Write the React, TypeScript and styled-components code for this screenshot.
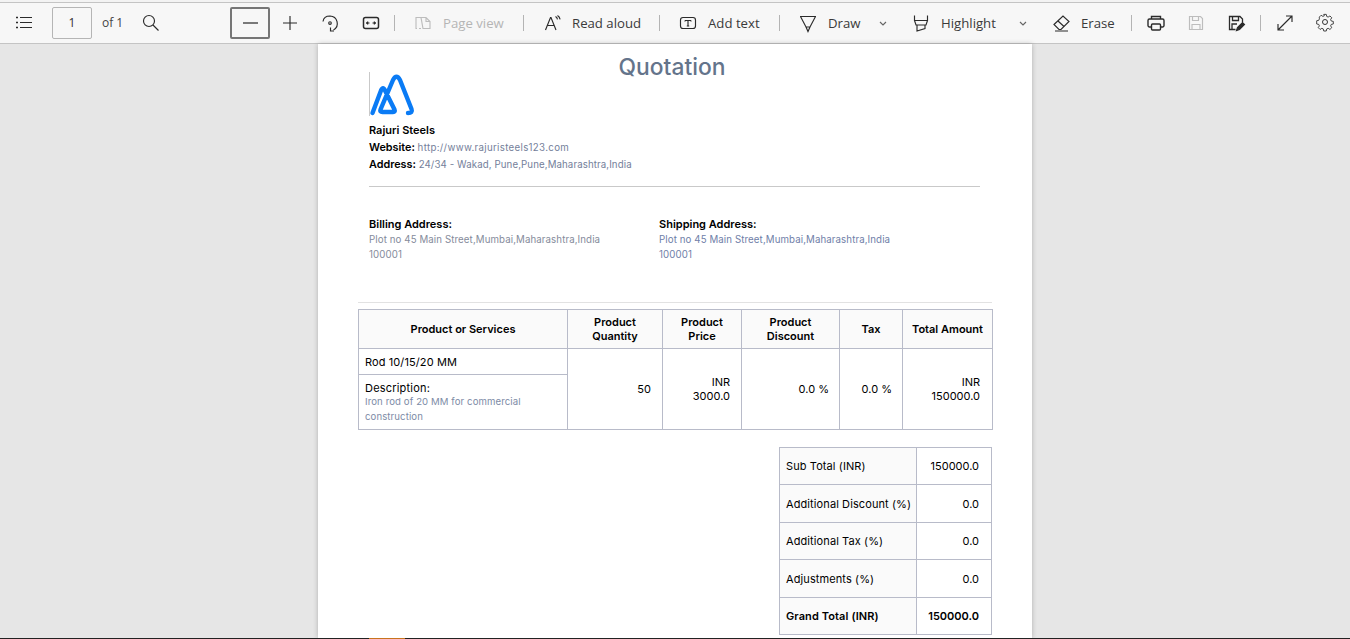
import React from 'react';
import styled, { createGlobalStyle } from 'styled-components';

const GlobalStyle = createGlobalStyle`
  html, body {
    margin: 0;
    padding: 0;
    height: 100%;
    overflow: hidden;
    background: #e6e6e6;
  }
`;

const Viewer = styled.div`
  position: relative;
  width: 1350px;
  height: 639px;
  overflow: hidden;
  background: #e6e6e6;
`;

// Toolbar
const Toolbar = styled.div`
  position: absolute;
  top: 2px;
  left: 0;
  width: 1350px;
  height: 42px;
  background: #f7f7f7;
  border-top: 1px solid #c4c4c4;
  border-bottom: 1px solid #c4c4c4;
  box-sizing: border-box;
  font-family: "Open Sans", "Noto Sans", sans-serif;
  font-size: 13.2px;
  color: #333;
`;

const TopStrip = styled.div`
  position: absolute;
  top: 0;
  left: 0;
  width: 1350px;
  height: 2px;
  background: #f3f3f3;
`;

const ToolIcon = styled.svg<{ $x: number; $y?: number; $size?: number }>`
  position: absolute;
  left: ${p => p.$x}px;
  top: ${p => p.$y ?? 10}px;
  width: ${p => p.$size ?? 20}px;
  height: ${p => p.$size ?? 20}px;
  fill: none;
  stroke: ${p => p.color ?? '#2b2b2b'};
  stroke-width: 1.15;
`;

const ToolLabel = styled.span<{ $x: number; $muted?: boolean }>`
  position: absolute;
  left: ${p => p.$x}px;
  top: 10px;
  line-height: 20px;
  white-space: nowrap;
  color: ${p => (p.$muted ? '#b5b5b5' : '#3a3a3a')};
`;

const Separator = styled.div<{ $x: number }>`
  position: absolute;
  left: ${p => p.$x}px;
  top: 12px;
  width: 1px;
  height: 16px;
  background: #b4b4b4;
`;

const PageInput = styled.div`
  position: absolute;
  left: 52px;
  top: 4px;
  width: 38px;
  height: 30px;
  border: 1px solid #b5b5b5;
  border-radius: 2px;
  text-align: center;
  line-height: 30px;
  font-size: 12px;
  color: #333;
`;

const PageCount = styled.span`
  position: absolute;
  left: 102px;
  top: 10px;
  line-height: 20px;
  font-size: 12px;
  color: #444;
`;

const FocusButton = styled.div`
  position: absolute;
  left: 230px;
  top: 4px;
  width: 36px;
  height: 28px;
  border: 2px solid #767676;
  border-radius: 2px;
  display: flex;
  align-items: center;
  justify-content: center;

  &::after {
    content: '';
    width: 15px;
    height: 2px;
    background: #7a7a7a;
  }
`;

// PDF sheet
const Sheet = styled.div`
  position: absolute;
  top: 44px;
  left: 318px;
  width: 714px;
  height: 594px;
  background: #fff;
  box-shadow: 0 0 5px rgba(0, 0, 0, 0.24);
  font-family: Inter, Roboto, sans-serif;
  color: #000;
`;

const Title = styled.h1`
  position: absolute;
  left: 0;
  right: 6px;
  top: 9px;
  margin: 0;
  text-align: center;
  font-size: 22.8px;
  line-height: 28px;
  font-weight: 500;
  color: #64748b;
`;

const LogoBox = styled.svg`
  position: absolute;
  left: 51px;
  top: 28px;
  width: 47px;
  height: 45px;
`;

const Company = styled.div`
  position: absolute;
  left: 51px;
  top: 78px;
  font-size: 11px;
  line-height: 17px;
  font-weight: 600;
  white-space: nowrap;
`;

const InfoRow = styled.div<{ $top: number }>`
  position: absolute;
  left: 51px;
  top: ${p => p.$top}px;
  font-size: 10.8px;
  line-height: 17px;
  font-weight: 600;
  white-space: nowrap;
`;

const Muted = styled.span<{ $wide?: boolean }>`
  font-size: 9.7px;
  font-weight: 400;
  color: #74809a;
  letter-spacing: ${p => (p.$wide ? '0.32px' : '0.1px')};
`;

const Rule = styled.div<{ $left: number; $width: number; $top: number; $color: string }>`
  position: absolute;
  left: ${p => p.$left}px;
  top: ${p => p.$top}px;
  width: ${p => p.$width}px;
  height: 1px;
  background: ${p => p.$color};
`;

const AddressBlock = styled.div<{ $left: number }>`
  position: absolute;
  left: ${p => p.$left}px;
  top: 172px;
  width: 260px;
`;

const AddressHead = styled.div`
  font-size: 11px;
  line-height: 17px;
  font-weight: 600;
`;

const AddressBody = styled.div<{ $tint?: boolean }>`
  margin-top: -1px;
  font-size: 9.7px;
  line-height: 15px;
  color: ${p => (p.$tint ? '#6f80a8' : '#858b9b')};
  letter-spacing: 0.1px;
`;

// Tables
const ItemsTable = styled.table`
  position: absolute;
  left: 40px;
  top: 265px;
  width: 634px;
  height: 121px;
  table-layout: fixed;
  border-collapse: collapse;
  font-size: 11px;
`;

const HeadCell = styled.th<{ $w: number }>`
  width: ${p => p.$w}px;
  height: 39px;
  padding: 0 4px;
  box-sizing: border-box;
  border: 1px solid #b8bbc9;
  background: #fafafa;
  font-weight: 600;
  line-height: 14px;
  text-align: center;
`;

const NameCell = styled.td`
  height: 26px;
  padding: 0 6px;
  box-sizing: border-box;
  border: 1px solid #b8bbc9;
  letter-spacing: 0.1px;
`;

const DescCell = styled.td`
  height: 55px;
  padding: 6px 6px 4px;
  box-sizing: border-box;
  border: 1px solid #b8bbc9;
  line-height: 14px;
  vertical-align: top;
  letter-spacing: 0.2px;
`;

const DescText = styled.div`
  margin-top: -1px;
  font-size: 9.6px;
  line-height: 15px;
  color: #7d8ba6;
  letter-spacing: 0.1px;
`;

const NumCell = styled.td<{ $pad: number }>`
  padding: 0 ${p => p.$pad}px 1px 6px;
  border: 1px solid #b8bbc9;
  text-align: right;
  line-height: 14px;
`;

const SummaryTable = styled.table`
  position: absolute;
  left: 461px;
  top: 403px;
  width: 213px;
  table-layout: fixed;
  border-collapse: collapse;
  font-size: 11px;
`;

const SummaryRow = styled.tr<{ $h: number }>`
  height: ${p => p.$h}px;
`;

const SummaryLabel = styled.td<{ $bold?: boolean }>`
  width: 137px;
  padding: 0 0 0 6px;
  box-sizing: border-box;
  border: 1px solid #b8bbc9;
  background: #fafafa;
  white-space: nowrap;
  letter-spacing: 0.1px;
  font-weight: ${p => (p.$bold ? 600 : 400)};
`;

const SummaryValue = styled.td<{ $bold?: boolean }>`
  padding: 0 12px 0 0;
  border: 1px solid #b8bbc9;
  text-align: right;
  font-weight: ${p => (p.$bold ? 600 : 400)};
`;

// Bottom edge of the window
const BottomLine = styled.div`
  position: absolute;
  left: 0;
  bottom: 0;
  width: 1350px;
  height: 1px;
  background: #222;
`;

const BottomAccent = styled.div`
  position: absolute;
  left: 369px;
  bottom: 0;
  width: 36px;
  height: 1px;
  background: #c8741e;
`;

const summaryRows = [
  { label: 'Sub Total (INR)', value: '150000.0', h: 37 },
  { label: 'Additional Discount (%)', value: '0.0', h: 38 },
  { label: 'Additional Tax (%)', value: '0.0', h: 37 },
  { label: 'Adjustments (%)', value: '0.0', h: 38 },
  { label: 'Grand Total (INR)', value: '150000.0', h: 37, bold: true },
];

const chevron = 'M7 9l3 3 3-3';

const App: React.FC = () => (
  <Viewer>
    <GlobalStyle />
    <TopStrip />
    <Toolbar>
      <ToolIcon $x={15} viewBox="0 0 20 20">
        <path d="M5 4.500h12M5 9.500h12M5 14.500h12" />
        <path d="M1 4.500h2M1 9.500h2M1 14.500h2" strokeWidth="1.600" />
      </ToolIcon>
      <PageInput>1</PageInput>
      <PageCount>of 1</PageCount>
      <ToolIcon $x={141} viewBox="0 0 20 20">
        <circle cx="8" cy="8" r="5.500" />
        <path d="M12 12l5.500 5.500" />
      </ToolIcon>
      <FocusButton />
      <ToolIcon $x={280} viewBox="0 0 20 20">
        <path d="M10 3v14M3 10h14" />
      </ToolIcon>
      <ToolIcon $x={320} viewBox="0 0 20 20">
        <path d="M3 8.500C3.500 5 6.500 3 10 3a7.500 7.500 0 0 1 3.500 14" />
        <path d="M10.500 14.500v3.500h3.500" />
        <circle cx="10" cy="10" r="1.300" />
      </ToolIcon>
      <ToolIcon $x={361} viewBox="0 0 20 20">
        <rect x="2.500" y="4.500" width="15" height="11" rx="2" strokeWidth="1.500" />
        <path d="M5.500 10h3M11.500 10h3" />
        <path d="M7 8.500L5 10l2 1.500zM13 8.500l2 1.500-2 1.500z" fill="#2b2b2b" strokeWidth="0.500" />
      </ToolIcon>
      <Separator $x={394} />
      <ToolIcon $x={413} viewBox="0 0 20 20" color="#bdbdbd">
        <path d="M8 4.500H3v11h1M6 15.500h2M10 15.500h7V8.500l-4-4H8zM13 4.500v4h4" />
      </ToolIcon>
      <ToolLabel $x={443} $muted>Page view</ToolLabel>
      <Separator $x={523} />
      <ToolIcon $x={543} viewBox="0 0 20 20">
        <path d="M2.500 17L7.500 4.500h.5L13 17M4.500 12.500h7" />
        <path d="M12.500 3.500c1 .6 1.700 1.500 2 2.800M14.500 2.500c1.400.9 2.300 2.200 2.600 3.800" />
      </ToolIcon>
      <ToolLabel $x={572}>Read aloud</ToolLabel>
      <Separator $x={659} />
      <ToolIcon $x={678} viewBox="0 0 20 20">
        <rect x="2.500" y="4.500" width="15" height="11" rx="2.500" />
        <path d="M7 7.500h6M10 7.500v5.500M8.800 13h2.400M7 7.500v1M13 7.500v1" />
      </ToolIcon>
      <ToolLabel $x={708}>Add text</ToolLabel>
      <Separator $x={779} />
      <ToolIcon $x={798} viewBox="0 0 20 20">
        <path d="M2 3.500h16M2.500 3.500l5.500 10.500h4l5.500-10.500M8 14l2 4.500 2-4.500" />
      </ToolIcon>
      <ToolLabel $x={828}>Draw</ToolLabel>
      <ToolIcon $x={873} viewBox="0 0 20 20" color="#666">
        <path d={chevron} />
      </ToolIcon>
      <ToolIcon $x={911} viewBox="0 0 20 20">
        <path d="M3.500 2.500v5h13v-5M3.500 7.500l1.500 4.500h10l1.500-4.500M6 12v6l8-2.500V12" />
      </ToolIcon>
      <ToolLabel $x={941}>Highlight</ToolLabel>
      <ToolIcon $x={1013} viewBox="0 0 20 20" color="#666">
        <path d={chevron} />
      </ToolIcon>
      <ToolIcon $x={1052} viewBox="0 0 20 20">
        <path d="M2 11.500L11 3l6 5.500-8 8H7z" />
        <path d="M6 8l6 5.500M3 18h13" />
      </ToolIcon>
      <ToolLabel $x={1081}>Erase</ToolLabel>
      <Separator $x={1131} />
      <ToolIcon $x={1146} viewBox="0 0 20 20">
        <path d="M5.500 6V3.500h9V6M5.500 14H3.500a1.500 1.500 0 0 1-1.500-1.500v-5A1.500 1.500 0 0 1 3.500 6h13A1.500 1.500 0 0 1 18 7.500v5a1.500 1.500 0 0 1-1.500 1.500h-2" strokeWidth="1.400" />
        <rect x="5.500" y="11" width="9" height="6" rx="1" strokeWidth="1.400" />
      </ToolIcon>
      <ToolIcon $x={1186} viewBox="0 0 20 20" color="#bdbdbd">
        <path d="M3.500 3.500h11l2 2v11h-13z" />
        <path d="M6.500 3.500v4h6v-4M6 16.500v-5h8v5" />
      </ToolIcon>
      <ToolIcon $x={1226} viewBox="0 0 20 20">
        <path d="M9.500 16.500h-6v-13h10.500l2.500 2.500v3" strokeWidth="1.300" />
        <path d="M6.500 3.500v4h6v-4M6 16v-5h5" strokeWidth="1.300" />
        <path d="M10.500 17.500l1-3 5-5 2 2-5 5z" fill="#2b2b2b" />
      </ToolIcon>
      <Separator $x={1260} />
      <ToolIcon $x={1275} viewBox="0 0 20 20">
        <path d="M3 17L17 3M11 3h6v6M3 11v6h6" />
      </ToolIcon>
      <ToolIcon $x={1315} $y={9} viewBox="0 0 24 24">
        <path d="M10.300 2.500h3.400l.6 2.800 1.900.8 2.400-1.500 2.400 2.400-1.500 2.400.8 1.900 2.800.6v3.400l-2.800.6-.8 1.900 1.500 2.400-2.400 2.400-2.400-1.500-1.900.8-.6 2.800h-3.400l-.6-2.800-1.900-.8-2.400 1.500-2.400-2.400 1.500-2.400-.8-1.900-2.800-.6V11l2.800-.6.8-1.900L4.400 6.100l2.400-2.400 2.400 1.500 1.900-.8z" transform="translate(1.200 0.600) scale(0.9)" />
        <circle cx="12" cy="12" r="3" />
      </ToolIcon>
    </Toolbar>

    <Sheet>
      <Title>Quotation</Title>
      <LogoBox viewBox="0 0 47 45">
        <path d="M0.500 0v44" stroke="#c9c9c9" strokeWidth="1" fill="none" />
        <path
          d="M3.500 41L12 18.500Q14 14 16 18.500L25.500 37.500Q26.500 40 24 40H13.500Q10.500 40 11.500 37.500L24 8Q27.500 1.500 31 8L42.500 37Q44 41 39 41"
          fill="none"
          stroke="#0a7bf5"
          strokeWidth="4.400"
          strokeLinecap="round"
          strokeLinejoin="round"
        />
      </LogoBox>
      <Company>Rajuri Steels</Company>
      <InfoRow $top={95}>Website: <Muted $wide>http://www.rajuristeels123.com</Muted></InfoRow>
      <InfoRow $top={112}>Address: <Muted>24/34 - Wakad, Pune,Pune,Maharashtra,India</Muted></InfoRow>
      <Rule $left={51} $width={611} $top={142} $color="#c9c9c9" />
      <AddressBlock $left={51}>
        <AddressHead>Billing Address:</AddressHead>
        <AddressBody>Plot no 45 Main Street,Mumbai,Maharashtra,India<br />100001</AddressBody>
      </AddressBlock>
      <AddressBlock $left={341}>
        <AddressHead>Shipping Address:</AddressHead>
        <AddressBody $tint>Plot no 45 Main Street,Mumbai,Maharashtra,India<br />100001</AddressBody>
      </AddressBlock>
      <Rule $left={40} $width={634} $top={258} $color="#e2e2e2" />

      <ItemsTable>
        <thead>
          <tr>
            <HeadCell $w={209}>Product or Services</HeadCell>
            <HeadCell $w={95}>Product<br />Quantity</HeadCell>
            <HeadCell $w={79}>Product<br />Price</HeadCell>
            <HeadCell $w={98}>Product<br />Discount</HeadCell>
            <HeadCell $w={63}>Tax</HeadCell>
            <HeadCell $w={90}>Total Amount</HeadCell>
          </tr>
        </thead>
        <tbody>
          <tr>
            <NameCell>Rod 10/15/20 MM</NameCell>
            <NumCell $pad={11} rowSpan={2}>50</NumCell>
            <NumCell $pad={11} rowSpan={2}>INR<br />3000.0</NumCell>
            <NumCell $pad={10} rowSpan={2}>0.0 %</NumCell>
            <NumCell $pad={10} rowSpan={2}>0.0 %</NumCell>
            <NumCell $pad={12} rowSpan={2}>INR<br />150000.0</NumCell>
          </tr>
          <tr>
            <DescCell>
              Description:
              <DescText>Iron rod of 20 MM for commercial construction</DescText>
            </DescCell>
          </tr>
        </tbody>
      </ItemsTable>

      <SummaryTable>
        <tbody>
          {summaryRows.map(row => (
            <SummaryRow key={row.label} $h={row.h}>
              <SummaryLabel $bold={row.bold}>{row.label}</SummaryLabel>
              <SummaryValue $bold={row.bold}>{row.value}</SummaryValue>
            </SummaryRow>
          ))}
        </tbody>
      </SummaryTable>
    </Sheet>

    <BottomLine />
    <BottomAccent />
  </Viewer>
);

export default App;
